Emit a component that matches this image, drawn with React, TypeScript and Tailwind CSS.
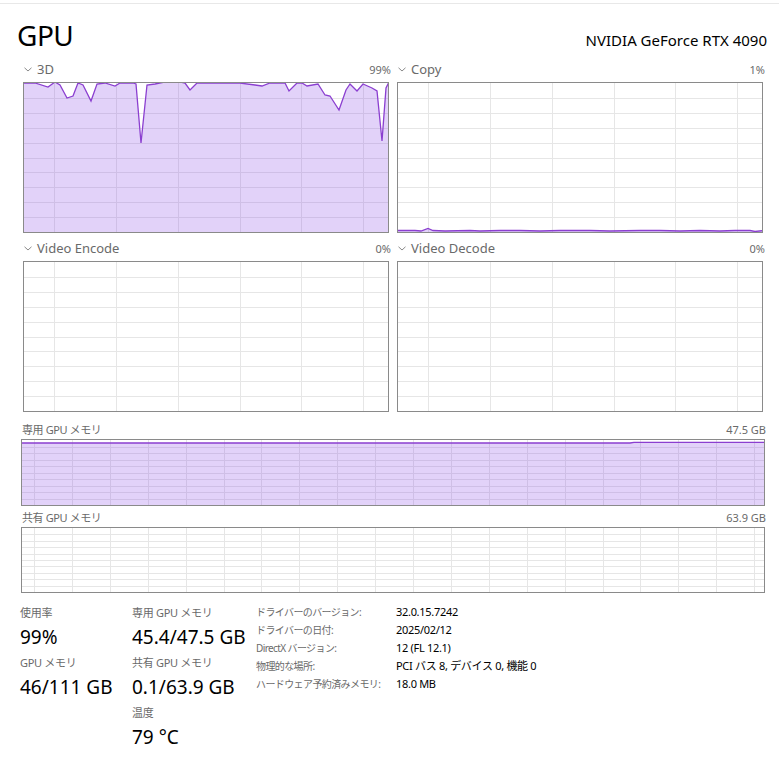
import React from "react";

type Pt = [number, number];

function Chart({
  w,
  h,
  vx,
  hn,
  pts,
  lineColor = "#8b3fd0",
}: {
  w: number;
  h: number;
  vx: number[];
  hn: number;
  pts?: Pt[];
  lineColor?: string;
}) {
  const hs: number[] = [];
  for (let i = 1; i < hn; i++) hs.push(Math.round((i * h) / hn) + 0.5);
  const poly = pts ? pts.map((p) => `${p[0]},${p[1]}`).join(" ") : "";
  const area = pts ? `0,${h} ${poly} ${w},${h}` : "";
  return (
    <div className="border border-[#8a8a8a] bg-white">
      <svg width={w} height={h} className="block">
        {vx.map((x, i) => (
          <line key={"v" + i} x1={x + 0.5} x2={x + 0.5} y1={0} y2={h} stroke="#e6e6e6" strokeWidth={1} />
        ))}
        {hs.map((y, i) => (
          <line key={"h" + i} x1={0} x2={w} y1={y} y2={y} stroke="#e6e6e6" strokeWidth={1} />
        ))}
        {pts && <polygon points={area} fill="rgba(140,75,230,0.25)" />}
        {pts && <polyline points={poly} fill="none" stroke={lineColor} strokeWidth={1.3} />}
      </svg>
    </div>
  );
}

const Chevron = () => (
  <svg width="8" height="5" viewBox="0 0 8 5" className="block mr-[5px]">
    <path d="M0.5 0.8 L4 4 L7.5 0.8" fill="none" stroke="#8a8a8a" strokeWidth="1" />
  </svg>
);

function GpuPanel({ label, pct }: { label: string; pct: string }) {
  return (
    <div className="h-[26px] flex items-center justify-between pl-[1px] mr-[-2px]">
      <div className="flex items-center">
        <Chevron />
        <span className="text-[13px] text-[#6a6a6a] leading-none">{label}</span>
      </div>
      <span className="text-[11px] text-[#6a6a6a] leading-none">{pct}</span>
    </div>
  );
}

const gpuVx = [30, 92, 154, 216, 277, 339];

const raw3d: Pt[] = [
  [23, 83], [35, 83], [48, 87], [55, 82], [60, 85], [67, 98], [73, 96], [78, 83], [83, 85], [91, 101],
  [97, 84], [105, 83], [115, 86], [120, 83], [133, 83], [136, 84], [141, 143], [147, 85], [155, 84],
  [165, 82], [180, 82], [185, 83], [190, 90], [197, 83], [240, 83], [255, 85], [262, 86], [270, 83],
  [285, 83], [289, 91], [297, 83], [302, 83], [307, 86], [318, 84], [325, 95], [330, 96], [339, 110],
  [346, 90], [350, 84], [357, 91], [363, 84], [372, 88], [377, 91], [382, 141], [386, 88], [389, 82],
];
const pts3d: Pt[] = raw3d.map(([x, y]) => [x - 24, y - 83] as Pt);

const copyRaw: Pt[] = [
  [397, 230.5], [415, 230.5], [421, 231], [428, 228.5], [433, 230.5], [445, 231], [470, 230.5], [480, 231],
  [500, 230.5], [520, 230.5], [540, 231], [560, 230.5], [590, 230.5], [610, 231], [640, 230.5], [660, 230.5],
  [680, 231], [700, 230.5], [720, 231], [735, 230.5], [750, 230.5], [755, 231.5], [764, 230.5],
];
const ptsCopy: Pt[] = copyRaw.map(([x, y]) => [x - 398, y - 83] as Pt);

const memVx: number[] = [];
for (let i = 0; i < 20; i++) memVx.push(Math.round(12 + i * 37.9));

const memPts: Pt[] = [
  [0, 3], [608, 3], [612, 2.3], [742, 2.3],
];

const Label = ({ children }: { children: React.ReactNode }) => (
  <div className="h-[22px] flex items-center text-[11px] text-[#6a6a6a] leading-none whitespace-nowrap tracking-[-0.3px]">{children}</div>
);
const Value = ({ children }: { children: React.ReactNode }) => (
  <div className="h-[28px] flex items-center text-[19px] text-black leading-none whitespace-nowrap">{children}</div>
);

export default function App() {
  return (
    <div className="w-[779px] h-[763px] bg-white overflow-hidden font-['Noto_Sans','Noto_Sans_CJK_JP',sans-serif] text-black">
      <div className="h-[3px]" />
      <div className="h-px bg-[#e8e8e8]" />
      <div className="h-[52px] flex items-baseline justify-between pl-[17px] pr-[12px] pt-[14px]">
        <span className="text-[28px] leading-[34px] tracking-[-0.5px]">GPU</span>
        <span className="text-[15px] leading-[20px]">NVIDIA GeForce RTX 4090</span>
      </div>

      <div className="pl-[23px] flex gap-[8px]">
        <div className="w-[366px]">
          <GpuPanel label="3D" pct="99%" />
          <Chart w={364} h={149} vx={gpuVx} hn={10} pts={pts3d} />
        </div>
        <div className="w-[366px]">
          <GpuPanel label="Copy" pct="1%" />
          <Chart w={364} h={149} vx={gpuVx} hn={10} pts={ptsCopy} />
        </div>
      </div>

      <div className="pl-[23px] flex gap-[8px]">
        <div className="w-[366px]">
          <div className="h-[2px]" />
          <GpuPanel label="Video Encode" pct="0%" />
          <Chart w={364} h={149} vx={gpuVx} hn={10} />
        </div>
        <div className="w-[366px]">
          <div className="h-[2px]" />
          <GpuPanel label="Video Decode" pct="0%" />
          <Chart w={364} h={149} vx={gpuVx} hn={10} />
        </div>
      </div>

      <div className="pl-[21px] w-[765px]">
        <div className="h-[27px] flex items-end justify-between pb-[4px] pl-[1px] mr-[-1px]">
          <span className="text-[11px] text-[#6a6a6a] leading-none tracking-[-0.4px]">専用 GPU メモリ</span>
          <span className="text-[11px] text-[#6a6a6a] leading-none">47.5 GB</span>
        </div>
        <Chart w={742} h={65} vx={memVx} hn={10} pts={memPts} />
        <div className="h-[21px] flex items-end justify-between pb-[4px] pl-[1px] mr-[-1px]">
          <span className="text-[11px] text-[#6a6a6a] leading-none tracking-[-0.4px]">共有 GPU メモリ</span>
          <span className="text-[11px] text-[#6a6a6a] leading-none">63.9 GB</span>
        </div>
        <Chart w={742} h={64} vx={memVx} hn={10} />
      </div>

      <div className="mt-[8px] flex pl-[20px]">
        <div className="w-[112px]">
          <Label>使用率</Label>
          <Value>99%</Value>
          <Label>GPU メモリ</Label>
          <Value>46/111 GB</Value>
        </div>
        <div className="w-[124px]">
          <Label>専用 GPU メモリ</Label>
          <Value>45.4/47.5 GB</Value>
          <Label>共有 GPU メモリ</Label>
          <Value>0.1/63.9 GB</Value>
          <Label>温度</Label>
          <Value>79 °C</Value>
        </div>
        <div className="pt-[2px] text-[11px] leading-[18px]">
          {[
            ["ドライバーのバージョン:", "32.0.15.7242"],
            ["ドライバーの日付:", "2025/02/12"],
            ["DirectX バージョン:", "12 (FL 12.1)"],
            ["物理的な場所:", "PCI バス 8, デバイス 0, 機能 0"],
            ["ハードウェア予約済みメモリ:", "18.0 MB"],
          ].map(([k, v]) => (
            <div key={k} className="flex h-[18px] items-center whitespace-nowrap">
              <span className="w-[140px] text-[#6a6a6a] text-[10px] tracking-[-0.6px]">{k}</span>
              <span className="text-black tracking-[-0.3px]">{v}</span>
            </div>
          ))}
        </div>
      </div>
    </div>
  );
}
